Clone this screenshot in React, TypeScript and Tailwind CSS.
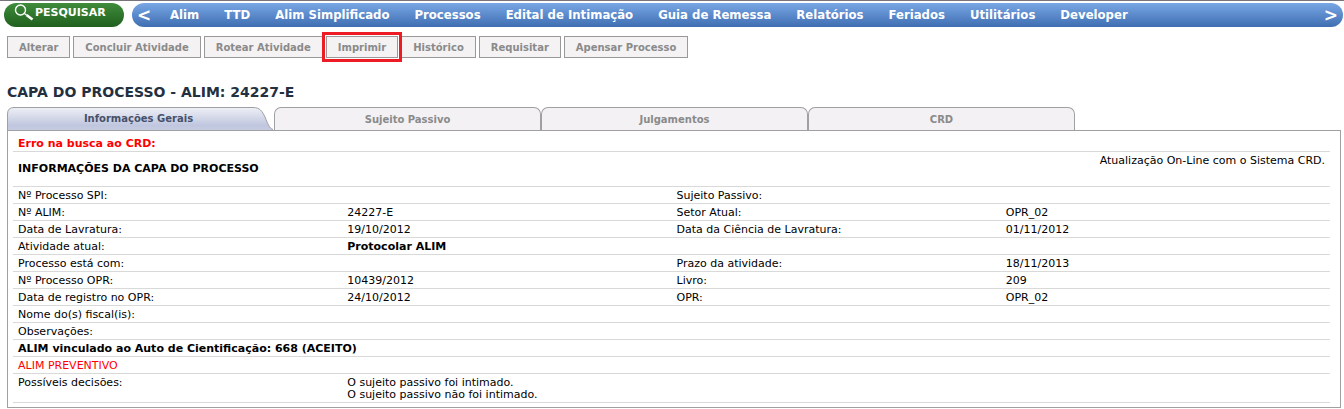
import React, { useState } from "react";
import clsx from "clsx";

type Row = {
  label: string;
  value?: string;
  label2?: string;
  value2?: string;
  strong?: boolean;
};

const menu = [
  "Alim",
  "TTD",
  "Alim Simplificado",
  "Processos",
  "Edital de Intimação",
  "Guia de Remessa",
  "Relatórios",
  "Feriados",
  "Utilitários",
  "Developer",
];

const actions = [
  "Alterar",
  "Concluir Atividade",
  "Rotear Atividade",
  "Imprimir",
  "Histórico",
  "Requisitar",
  "Apensar Processo",
];

const tabs = ["Informações Gerais", "Sujeito Passivo", "Julgamentos", "CRD"];

const rows: Row[] = [
  { label: "Nº Processo SPI:", label2: "Sujeito Passivo:" },
  { label: "Nº ALIM:", value: "24227-E", label2: "Setor Atual:", value2: "OPR_02" },
  {
    label: "Data de Lavratura:",
    value: "19/10/2012",
    label2: "Data da Ciência de Lavratura:",
    value2: "01/11/2012",
  },
  { label: "Atividade atual:", value: "Protocolar ALIM", strong: true },
  { label: "Processo está com:", label2: "Prazo da atividade:", value2: "18/11/2013" },
  { label: "Nº Processo OPR:", value: "10439/2012", label2: "Livro:", value2: "209" },
  { label: "Data de registro no OPR:", value: "24/10/2012", label2: "OPR:", value2: "OPR_02" },
  { label: "Nome do(s) fiscal(is):" },
  { label: "Observações:" },
];

function TopBar() {
  return (
    <header className="flex gap-2 border-t border-[#77757a] pt-[2px] pr-px pl-1 font-bold text-white">
      <button
        type="button"
        className="flex h-6 w-30 shrink-0 rounded-full bg-linear-to-b from-[#3f8c3b] to-[#20601f] pl-[10px] text-[11px] leading-5"
      >
        <svg width="21" height="18" viewBox="0 0 21 18" fill="none" stroke="#fff">
          <circle cx="6.5" cy="7" r="5" strokeWidth="1.4" />
          <path d="M10.5 10.5l2 1.5" strokeWidth="1.4" />
          <path d="M12.5 12l6 4.5" strokeWidth="2.6" />
        </svg>
        PESQUISAR
      </button>
      <nav className="flex h-6 grow items-center rounded-full bg-linear-to-b from-[#79a7e5] to-[#3f6eb2] px-[5px]">
        <button type="button" aria-label="Anterior" className="w-[33px] text-left text-[17px] leading-6">
          &lt;
        </button>
        <ul className="flex grow gap-[25px] font-['DejaVu_Sans_Condensed','DejaVu_Sans',sans-serif] text-[13px]">
          {menu.map((item) => (
            <li key={item}>
              <a href="#" className="whitespace-nowrap">
                {item}
              </a>
            </li>
          ))}
        </ul>
        <button type="button" aria-label="Próximo" className="text-[17px] leading-6">
          &gt;
        </button>
      </nav>
    </header>
  );
}

// The selected tab has a slanted right edge
function ActiveTabShape() {
  return (
    <svg
      className="absolute inset-0 h-full w-full"
      viewBox="0 0 267 23"
      preserveAspectRatio="none"
      aria-hidden="true"
    >
      <defs>
        <linearGradient id="tab" x1="0" y1="0" x2="0" y2="1">
          <stop offset="0" stopColor="#eff0f6" />
          <stop offset="0.8" stopColor="#bfc6de" />
          <stop offset="1" stopColor="#c6cce2" />
        </linearGradient>
      </defs>
      <path
        d="M.5 23V7Q.5 .5 7 .5H246C253 .5 255 4 258 10C261 17 262 21 266 22.5V23Z"
        fill="url(#tab)"
      />
      <path
        d="M.5 23V7Q.5 .5 7 .5H246C253 .5 255 4 258 10C261 17 262 21 266 22.5"
        fill="none"
        stroke="#a0a0a2"
      />
    </svg>
  );
}

export default function App() {
  const [activeTab, setActiveTab] = useState(0);

  const line = "border-b border-[#d9d9d9] px-[5px] align-top";
  const cell = clsx(line, "pt-[2px]");

  return (
    <div className="bg-white font-['DejaVu_Sans',sans-serif] text-[11px] text-black">
      <TopBar />

      <main className="pr-[3px] pl-[7px]">
        <div className="mt-[9px] flex gap-[3px]">
          {actions.map((action) => (
            <button
              key={action}
              type="button"
              className={clsx(
                "h-[22px] border border-[#999] bg-[#f4f2f3] px-[11px] text-[10px] font-bold whitespace-nowrap text-[#8a8a8a]",
                action === "Imprimir" && "z-10 outline-3 outline-offset-1 outline-[#ed1c24]"
              )}
            >
              {action}
            </button>
          ))}
        </div>

        <h1 className="mt-6 text-[14px] leading-5 font-bold text-[#24303f]">
          CAPA DO PROCESSO - ALIM: 24227-E
        </h1>

        <div role="tablist" className="mt-[5px] flex">
          {tabs.map((tab, i) => (
            <button
              key={tab}
              type="button"
              role="tab"
              aria-selected={i === activeTab}
              onClick={() => setActiveTab(i)}
              className={clsx(
                "relative h-[23px] w-[267px] text-[10px] font-bold",
                i === activeTab
                  ? "pr-1 text-[#46506b]"
                  : "rounded-t-[7px] border border-b-0 border-[#a0a0a2] bg-[#f3f1f3] text-[#8a8a8a]"
              )}
            >
              {i === activeTab && <ActiveTabShape />}
              <span className="relative">{tab}</span>
            </button>
          ))}
        </div>

        <section className="border border-[#a0a0a2] pr-[10px] pb-1 pl-[5px]">
          <table className="w-full table-fixed border-separate border-spacing-0 leading-[14px]">
            <tbody>
              <tr>
                <td colSpan={4} className={clsx(line, "h-[21px] pt-[6px] font-bold text-[#f00]")}>
                  Erro na busca ao CRD:
                </td>
              </tr>
              <tr>
                <td colSpan={2} className={clsx(line, "h-[35px] pt-[10px] font-bold")}>
                  INFORMAÇÕES DA CAPA DO PROCESSO
                </td>
                <td colSpan={2} className={clsx(cell, "text-right")}>
                  Atualização On-Line com o Sistema CRD.
                </td>
              </tr>
              {rows.map((row) => (
                <tr key={row.label}>
                  <td className={cell}>{row.label}</td>
                  <td className={clsx(cell, row.strong && "font-bold")}>{row.value}</td>
                  <td className={cell}>{row.label2}</td>
                  <td className={cell}>{row.value2}</td>
                </tr>
              ))}
              <tr>
                <td colSpan={4} className={clsx(cell, "font-bold")}>
                  ALIM vinculado ao Auto de Cientificação: 668 (ACEITO)
                </td>
              </tr>
              <tr>
                <td colSpan={4} className={clsx(cell, "text-[#f00]")}>
                  ALIM PREVENTIVO
                </td>
              </tr>
              <tr className="h-[29px] leading-3">
                <td className={clsx(line, "pt-[3px]")}>Possíveis decisões:</td>
                <td colSpan={3} className={clsx(line, "pt-[3px]")}>
                  <p>O sujeito passivo foi intimado.</p>
                  <p>O sujeito passivo não foi intimado.</p>
                </td>
              </tr>
            </tbody>
          </table>
        </section>
      </main>
    </div>
  );
}
